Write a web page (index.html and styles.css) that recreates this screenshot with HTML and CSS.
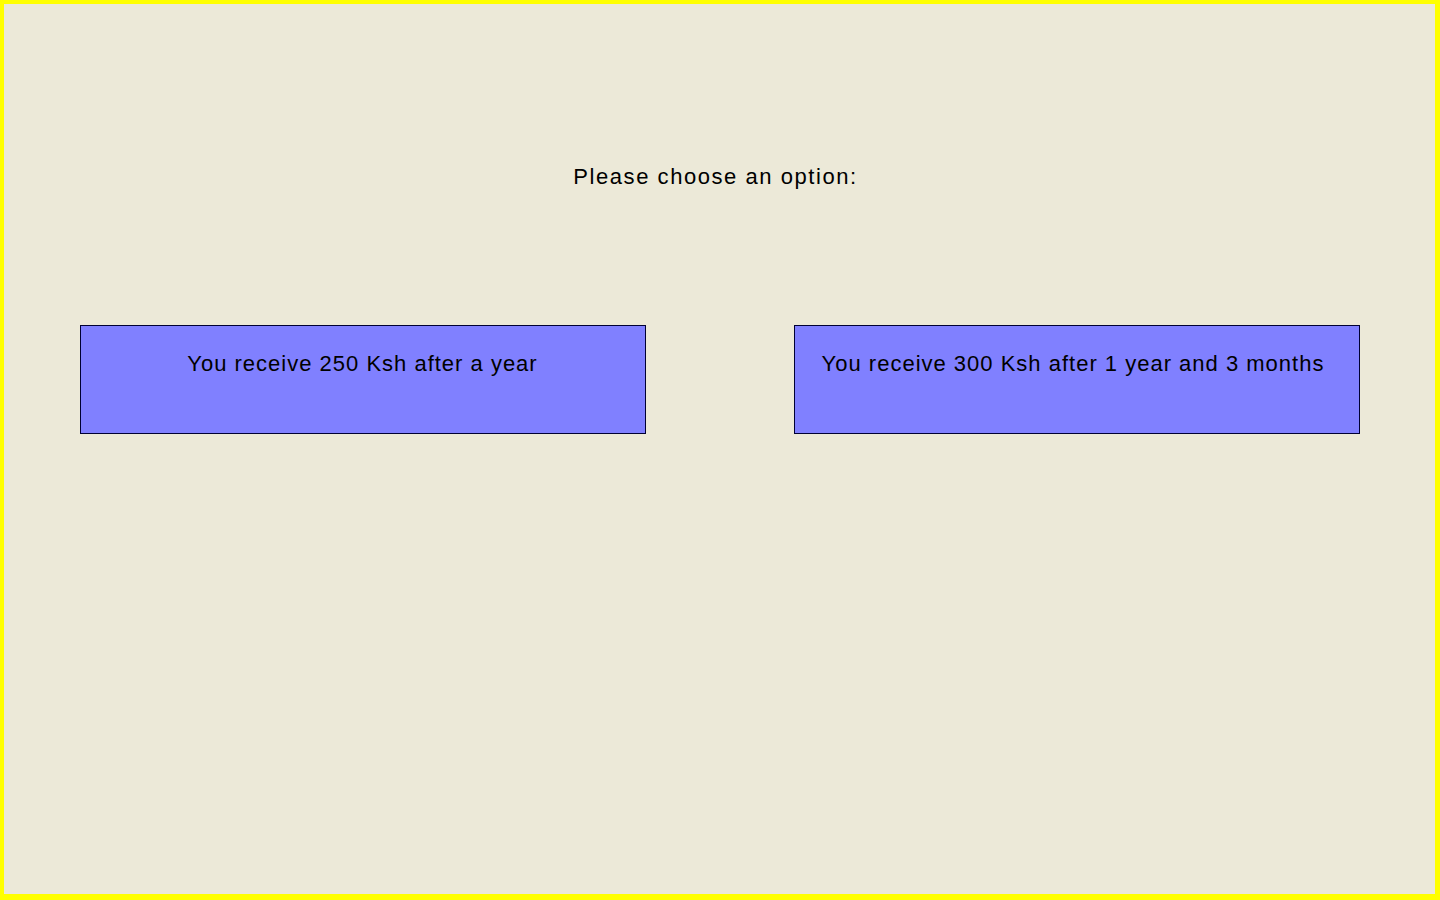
FILE: index.html
```html
<!DOCTYPE html>
<html>
<head>
<meta charset="utf-8">
<link rel="stylesheet" href="styles.css">
</head>
<body>
<div class="frame">
  <div class="prompt">Please choose an option:</div>
  <div class="options">
    <div class="option">You receive 250 Ksh after a year</div>
    <div class="option option-late">You receive 300 Ksh after 1 year and 3 months</div>
  </div>
</div>
</body>
</html>
```
FILE: styles.css
```css
html, body {
  margin: 0;
  padding: 0;
  width: 1440px;
  height: 900px;
  overflow: hidden;
  background: #ffff00;
}
.frame {
  box-sizing: border-box;
  width: 1440px;
  height: 899px;
  border-style: solid;
  border-color: #ffff00;
  border-width: 4px 5px 5px 4px;
  background: #ece9d8;
  font-family: "Liberation Sans", Arial, sans-serif;
  color: #000;
  display: flex;
  flex-direction: column;
  align-items: center;
}
.prompt {
  margin-top: 158px;
  font-size: 22px;
  line-height: 30px;
  height: 30px;
  letter-spacing: 1.55px;
  padding-right: 8px;
}
.options {
  margin-top: 133px;
  width: 1280px;
  display: flex;
  justify-content: space-between;
}
.option {
  box-sizing: border-box;
  width: 566px;
  height: 109px;
  border: 1px solid #000033;
  background: #8080ff;
  font-size: 22px;
  line-height: 28px;
  padding-top: 24px;
  text-align: center;
  letter-spacing: 1px;
  color: #000;
}
.option-late {
  padding-right: 7px;
}
```
